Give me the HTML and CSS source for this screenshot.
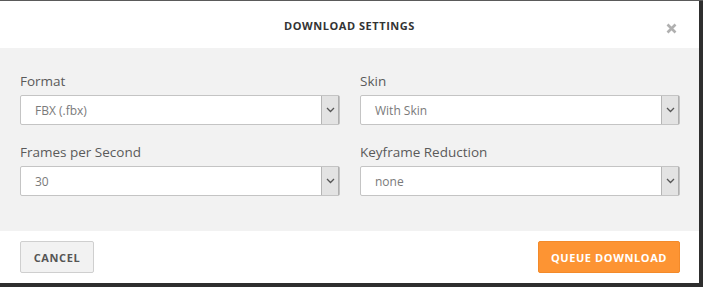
FILE: index.html
```html
<!DOCTYPE html>
<html>
<head>
<meta charset="utf-8">
<link rel="stylesheet" href="styles.css">
</head>
<body>
<div class="modal">
  <div class="header">
    <h1 class="title">DOWNLOAD SETTINGS</h1>
    <span class="close"><svg width="11" height="11" viewBox="0 0 11 11"><path d="M1.5 1.5 L9.5 9.5 M9.5 1.5 L1.5 9.5" stroke="#b0b0b0" stroke-width="2.6" stroke-linecap="butt"/></svg></span>
  </div>
  <div class="content">
    <div class="field">
      <label class="label">Format</label>
      <div class="select"><span class="value">FBX (.fbx)</span><span class="arrow"><svg width="9" height="6" viewBox="0 0 9 6"><path d="M1 1 L4.5 4.5 L8 1" fill="none" stroke="#555" stroke-width="1.3"/></svg></span></div>
    </div>
    <div class="field">
      <label class="label">Skin</label>
      <div class="select"><span class="value">With Skin</span><span class="arrow"><svg width="9" height="6" viewBox="0 0 9 6"><path d="M1 1 L4.5 4.5 L8 1" fill="none" stroke="#555" stroke-width="1.3"/></svg></span></div>
    </div>
    <div class="field">
      <label class="label">Frames per Second</label>
      <div class="select"><span class="value">30</span><span class="arrow"><svg width="9" height="6" viewBox="0 0 9 6"><path d="M1 1 L4.5 4.5 L8 1" fill="none" stroke="#555" stroke-width="1.3"/></svg></span></div>
    </div>
    <div class="field">
      <label class="label">Keyframe Reduction</label>
      <div class="select"><span class="value">none</span><span class="arrow"><svg width="9" height="6" viewBox="0 0 9 6"><path d="M1 1 L4.5 4.5 L8 1" fill="none" stroke="#555" stroke-width="1.3"/></svg></span></div>
    </div>
  </div>
  <div class="footer">
    <button class="btn btn-cancel">CANCEL</button>
    <button class="btn btn-queue">QUEUE DOWNLOAD</button>
  </div>
</div>
</body>
</html>
```

FILE: styles.css
```css
html, body {
  margin: 0;
  padding: 0;
  background: #2e2e2e;
  height: 287px;
  overflow: hidden;
}
body {
  font-family: "Open Sans", "DejaVu Sans", sans-serif;
  border-top: 1px solid #5a5a5a;
}
.modal {
  width: 699px;
  height: 282px;
  background: #fff;
  display: flex;
  flex-direction: column;
}
.header {
  height: 47px;
  display: flex;
  align-items: center;
  justify-content: center;
  position: relative;
}
.title {
  margin: 0;
  font-size: 11px;
  font-weight: 700;
  color: #333;
  letter-spacing: 0.55px;
  padding-top: 2px;
}
.close {
  position: absolute;
  right: 22px;
  top: 22px;
  width: 11px;
  height: 11px;
  display: flex;
}
.content {
  background: #f2f2f2;
  height: 183px;
  box-sizing: border-box;
  padding: 24px 19px 0 20px;
  display: grid;
  grid-template-columns: 320px 320px;
  column-gap: 20px;
  row-gap: 18px;
  align-content: start;
}
.field {
  display: flex;
  flex-direction: column;
}
.label {
  font-size: 13.5px;
  color: #5a5a5a;
  line-height: 18px;
  margin-bottom: 5px;
}
.select {
  height: 30px;
  box-sizing: border-box;
  border: 1px solid #c4c4c4;
  border-radius: 2px;
  background: #fff;
  display: flex;
  align-items: center;
}
.value {
  flex: 1;
  padding-left: 14px;
  font-size: 12px;
  color: #7a7a7a;
}
.arrow {
  width: 16px;
  height: 100%;
  background: #e3e3e3;
  border-left: 1px solid #b5b5b5;
  border-right: 1px solid #b0b0b0;
  display: flex;
  align-items: center;
  justify-content: center;
}
.footer {
  flex: 1;
  display: flex;
  justify-content: space-between;
  align-items: flex-start;
  padding: 10px 19px 0 20px;
}
.btn {
  height: 32px;
  font-family: "Open Sans", "DejaVu Sans", sans-serif;
  font-size: 11px;
  font-weight: 700;
  letter-spacing: 0.6px;
  border-radius: 2px;
  cursor: pointer;
  padding: 0;
}
.btn-cancel {
  width: 74px;
  background: #f2f2f2;
  border: 1px solid #cfcfcf;
  color: #555;
}
.btn-queue {
  width: 142px;
  background: #fd9433;
  border: 1px solid #f38a2a;
  color: #fff;
}
```
